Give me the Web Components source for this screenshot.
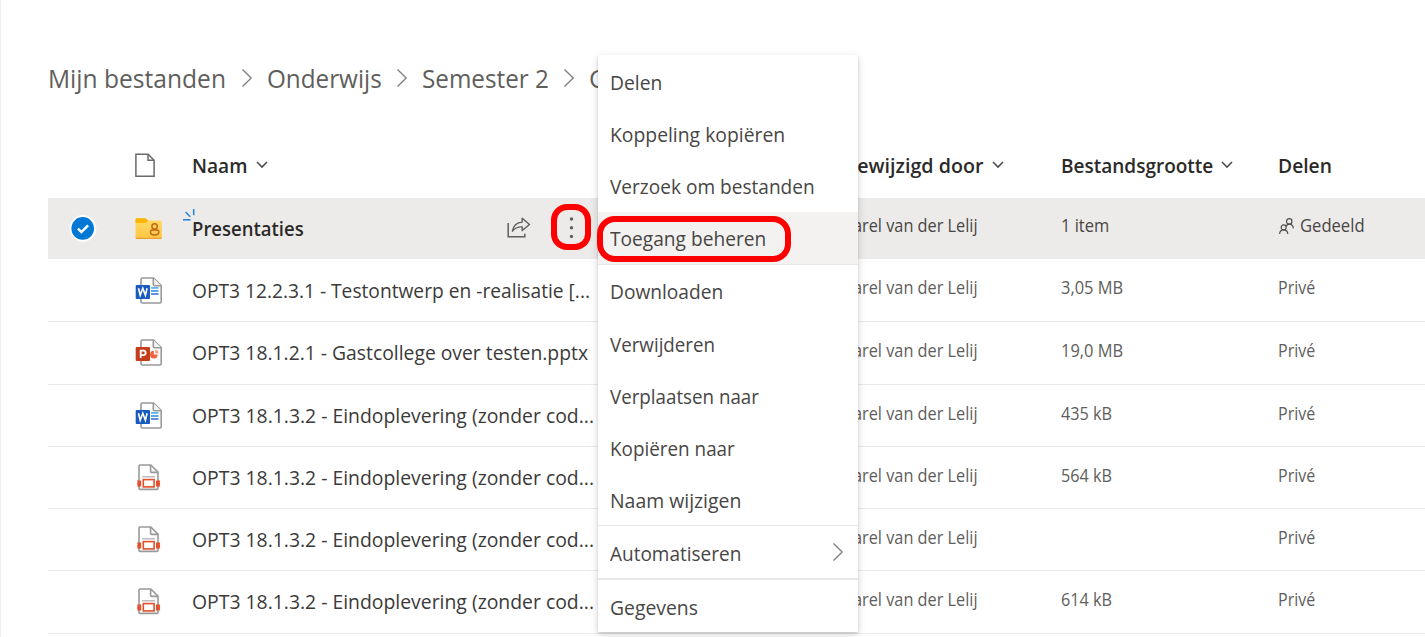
<!DOCTYPE html>
<html lang="nl">
<head>
<meta charset="utf-8">
<title>Mijn bestanden</title>
<style>
html,body{margin:0;height:100%;overflow:hidden;background:#fff}
body{font-family:"Open Sans","Noto Sans",sans-serif}
</style>
</head>
<body>
<file-browser></file-browser>
<script>
function define(name, html, ready) {
  const tpl = document.createElement('template');
  tpl.innerHTML = html;
  customElements.define(name, class extends HTMLElement {
    connectedCallback() {
      if (this.shadowRoot) return;
      this.attachShadow({mode: 'open'}).append(tpl.content.cloneNode(true));
      if (ready) ready(this, this.shadowRoot);
    }
  });
}

/* Text condensed to a given width */
define('fit-text', `<style>
:host{display:inline-block;white-space:nowrap;flex:none}
span{display:inline-block;transform-origin:0 50%}
</style><span><slot></slot></span>`, (host, root) => {
  const w = +host.getAttribute('w');
  if (!w) return;
  const s = root.querySelector('span');
  s.style.transform = 'scaleX(' + w / s.offsetWidth + ')';
  host.style.width = w + 'px';
});

const paper = '<path d="M7.300 2h11.200l7.700 7.700v16a1.300 1.300 0 0 1-1.300 1.300H7.300a1.300 1.300 0 0 1-1.300-1.300V3.300A1.300 1.300 0 0 1 7.300 2Z" fill="#fff" stroke="#999" stroke-width="1.600"/><path d="M18.300 2v6.500a1.300 1.300 0 0 0 1.300 1.300h6.600" fill="#f4f4f4" stroke="#999" stroke-width="1.600"/>';
const icons = {
  page: [28, 28, '<path d="M.9 2.200h12.200l6 6v16H.9Z" fill="none" stroke="#6b6967" stroke-width="1.500"/><path d="M13 2.200v6h6" fill="none" stroke="#6b6967" stroke-width="1.500"/>'],
  folder: [28, 28, '<defs><linearGradient id="f" x2="0" y2="1"><stop stop-color="#ffdc68"/><stop offset="1" stop-color="#ffc543"/></linearGradient></defs><path d="M.5 5.500a1.300 1.300 0 0 1 1.300-1.300h8.400l3 2.400h12.400a1.300 1.300 0 0 1 1.300 1.300v15.800a1.300 1.300 0 0 1-1.300 1.300H1.800a1.300 1.300 0 0 1-1.300-1.300Z" fill="url(#f)"/><path d="M.5 9V5.500a1.300 1.300 0 0 1 1.300-1.300h8.400l3 2.400-2 1.800q-.8.600-1.800.600Z" fill="#ffb400"/><path d="M.6 23.700q.2 1.300 1.300 1.300h23.600q1.200 0 1.400-1.300Z" fill="#e8a02e"/><circle cx="19.600" cy="12.400" r="2.700" fill="none" stroke="#c4661b" stroke-width="1.500"/><path d="M15.500 18q0-2 2-2h4.300q2 0 2 2c0 2-1.800 3-4.200 3s-4.100-1-4.100-3Z" fill="none" stroke="#c4661b" stroke-width="1.500"/>'],
  word: [28, 28, paper + '<path d="M16 11.900h7.500" stroke="#41a5ee" stroke-width="1.500"/><path d="M16 15h7.500" stroke="#2b88e3" stroke-width="1.500"/><path d="M16 18h7.500" stroke="#2b6cd0" stroke-width="1.500"/><rect x=".7" y="9" width="14.300" height="14" rx="1" fill="#185abd"/><path d="m3.500 12.300 1.700 7 2.600-7 2.600 7 1.700-7" fill="none" stroke="#fff" stroke-width="1.600"/>'],
  ppt: [28, 28, paper + '<path d="M18.800 12.800v3.600h3.800a3.800 3.800 0 1 1-3.800-3.600Z" fill="#f0653f"/><path d="M20.300 11.500a3.800 3.800 0 0 1 3.300 3.700h-3.300Z" fill="#ff9a7c"/><rect x=".7" y="9" width="14.300" height="14" rx="1" fill="#c43e1c"/><path d="M5.700 19.900v-7.300h2.700a2.200 2.200 0 0 1 0 4.500H5.700" fill="none" stroke="#fff" stroke-width="1.800"/>'],
  pdf: [28, 28, '<g transform="translate(0 -.7)"><path d="M5 1.700h10.800l7.200 7.200v16.200q0 1-1 1H5q-1 0-1-1V2.700q0-1 1-1Z" fill="#fff" stroke="#999" stroke-width="1.600"/><path d="M15.600 1.800v6.300q0 1 1 1H23" fill="none" stroke="#999" stroke-width="1.600"/><path d="M7 13.500h13" stroke="#b8b8b8" stroke-width="1.400"/><path d="M2 17.300h4.200v5.800H2l.6-1.200-.6-1.300.6-1.500ZM25.300 17.300H21v5.800h4.300l-.6-1.200.6-1.300-.6-1.500Z" fill="#e2502c"/><rect x="8.300" y="16.300" width="10.800" height="7.300" fill="#fff" stroke="#e2502c" stroke-width="1.600"/></g>'],
  chevron: [12, 8, '<path d="m1 1 5 5 5-5" fill="none" stroke="#504e4c" stroke-width="1.600"/>'],
  next: [12, 20, '<path d="m1.500 1.500 8.700 8.500-8.700 8.500" fill="none" stroke="#807e7c" stroke-width="1.300"/>'],
  check: [28, 28, '<circle cx="14" cy="14.400" r="13.300" fill="#fff"/><circle cx="13.700" cy="14.400" r="11.300" fill="#0078d4"/><path d="m9 14.700 3.400 3.400 6.700-6.800" fill="none" stroke="#fff" stroke-width="2.500"/>'],
  share: [24, 22, '<path d="M1.200 6v13.800h16.600v-3" fill="none" stroke="#605e5c" stroke-width="1.500"/><path d="M15.200 1.300 22.500 7.500l-7.300 6v-3.600c-4.200-.2-7.300 1-9.800 4.300.8-5.300 4.300-8.700 9.800-9.100Z" fill="none" stroke="#605e5c" stroke-width="1.400" stroke-linejoin="round"/>'],
  dots: [6, 24, '<g fill="#605e5c"><circle cx="3.500" cy="3" r="1.700"/><circle cx="3.500" cy="11.700" r="1.700"/><circle cx="3.500" cy="20.400" r="1.700"/></g>'],
  people: [17, 18, '<g fill="none" stroke="#504e4c" stroke-width="1.200" transform="translate(.7 1.700)"><circle cx="10.500" cy="3.700" r="2.700"/><path d="M7.500 8.500c.6-1.500 1.800-2 3-2 2.300 0 3.900 1.600 4.200 4.200"/><circle cx="5" cy="9.700" r="2.500"/><path d="M.9 16.300c.1-2.700 1.800-4.200 4.100-4.200s4 1.500 4.100 4.200"/></g>'],
  spark: [14, 13, '<g stroke-width="1.600" fill="none"><path d="M1 11.800h7.500" stroke="#2b88d8"/><path d="m3.600 4 4.700 4.700" stroke="#2b88d8"/><path d="M11.700 1v6.200" stroke="#2b88d8"/></g>']
};
define('ui-icon', `<style>:host{display:block;flex:none;line-height:0}svg{display:block}</style>`, (host, root) => {
  const [w, h, body] = icons[host.getAttribute('name')];
  const box = document.createElement('div');
  box.innerHTML = `<svg width="${w}" height="${h}" viewBox="0 0 ${w} ${h}">${body}</svg>`;
  root.append(box);
});

define('crumb-trail', `<style>
:host{display:flex;align-items:center;height:50px;padding:53px 0 1px 47.500px;font-size:25px;line-height:50px;color:#605e5c}
ui-icon{margin:0 14px 0 15px}
ui-icon:nth-of-type(3){margin-left:14px}
</style>
<fit-text w="178">Mijn bestanden</fit-text><ui-icon name="next"></ui-icon>
<fit-text w="114.500">Onderwijs</fit-text><ui-icon name="next"></ui-icon>
<fit-text w="127">Semester 2</fit-text><ui-icon name="next"></ui-icon>
<fit-text w="18">G</fit-text>`);

const columns = 'display:grid;grid-template-columns:87px 57px 651px 218px 217px 1fr;align-items:center;';
define('list-header', `<style>
:host{${columns}height:64px;padding-top:30px;margin:0 0 0 48px;font-size:20px;font-weight:600;color:#2b2a29;line-height:28px}
div{display:flex;align-items:center}
ui-icon[name=chevron]{margin:-3px 0 0 8px}
</style>
<span></span><ui-icon name="page"></ui-icon>
<div><fit-text w="55.500">Naam</fit-text><ui-icon name="chevron"></ui-icon></div>
<div><fit-text w="140.500">Gewijzigd door</fit-text><ui-icon name="chevron"></ui-icon></div>
<div><fit-text w="152">Bestandsgrootte</fit-text><ui-icon name="chevron"></ui-icon></div>
<div><fit-text w="54">Delen</fit-text></div>`);

define('file-row', `<style>
:host{${columns}box-sizing:border-box;margin-left:48px;border-bottom:1px solid #edebe9;color:#605e5c;font-size:17.500px;line-height:24px}
:host([selected]){background:#edebe9;color:#484644}
.check{padding-left:21px}
:host([icon=ppt]) .type,:host([icon=word]:not([low])) .type{padding-bottom:2px}
.name{display:flex;align-items:center;position:relative;font-size:20px;color:#3b3a39;line-height:28px}
:host([low]) .name{padding-top:2px}
:host([selected]) .name{font-weight:600;color:#2b2a29}
:host([selected]) .name>fit-text{padding-top:2px}
.meta{display:flex;align-items:center;gap:4.500px;padding-bottom:5.500px}
.spark{position:absolute;left:-10px;top:-5px}
.actions{display:flex;align-items:center;position:absolute;left:315px;gap:37px}
.mark{position:relative}
.mark::after{content:"";position:absolute;box-sizing:border-box;left:-17px;top:-12px;width:40px;height:46px;border:6px solid #fd0000;border-radius:16px}
</style>
<div class="check"></div><div class="type"></div>
<div class="name"></div>
<div class="meta"><fit-text w="135">Karel van der Lelij</fit-text></div>
<div class="meta size"></div><div class="meta share"></div>`, (host, root) => {
  const get = n => host.getAttribute(n);
  host.style.height = get('h') + 'px';
  const fit = (w, t) => `<fit-text w="${w}">${t}</fit-text>`;
  const sel = host.hasAttribute('selected');
  root.querySelector('.type').innerHTML = `<ui-icon name="${get('icon')}"></ui-icon>`;
  root.querySelector('.name').innerHTML = fit(get('w'), get('name')) +
    (sel ? '<ui-icon class="spark" name="spark"></ui-icon><div class="actions"><ui-icon name="share"></ui-icon><div class="mark"><ui-icon name="dots"></ui-icon></div></div>' : '');
  if (get('size')) root.querySelector('.size').innerHTML = fit(get('sw'), get('size'));
  root.querySelector('.share').innerHTML = sel ? '<ui-icon name="people"></ui-icon>' + fit(64.5, 'Gedeeld') : fit(37.5, 'Privé');
  if (sel) root.querySelector('.check').innerHTML = '<ui-icon name="check"></ui-icon>';
});

define('menu-item', `<style>
:host{display:flex;align-items:center;justify-content:space-between;height:52px;padding:0 14px 0 11.500px;font-size:20px;line-height:28px;color:#484644}
:host([active]){background:#f3f2f1}
:host([divided]){border-bottom:1px solid #e8e7e6}
:host([thick]){border-bottom-width:2px}
.label{position:relative;top:1px}
:host([late]) .label{top:2px}
:host([active]) .label::after{content:"";position:absolute;box-sizing:border-box;left:-12.500px;top:-9px;width:194px;height:46px;border:6px solid #fd0000;border-radius:18px}
</style><div class="label"></div>`, (host, root) => {
  root.querySelector('.label').innerHTML = `<fit-text w="${host.getAttribute('w')}">${host.getAttribute('label')}</fit-text>`;
  if (host.hasAttribute('submenu')) {
    const i = document.createElement('ui-icon');
    i.setAttribute('name', 'next');
    root.append(i);
  }
});

define('context-menu', `<style>
:host{display:block;position:absolute;left:598px;top:55px;width:260px;height:577px;padding-top:1px;box-sizing:border-box;background:#fff;box-shadow:0 3px 8px rgba(0,0,0,.16),0 1px 2px rgba(0,0,0,.14)}
</style>
<menu-item label="Delen" w="52"></menu-item>
<menu-item label="Koppeling kopiëren" w="175"></menu-item>
<menu-item label="Verzoek om bestanden" w="205"></menu-item>
<menu-item label="Toegang beheren" w="156" active divided></menu-item>
<menu-item label="Downloaden" w="113"></menu-item>
<menu-item label="Verwijderen" w="105" late></menu-item>
<menu-item label="Verplaatsen naar" w="149" late></menu-item>
<menu-item label="Kopiëren naar" w="124.500" late></menu-item>
<menu-item label="Naam wijzigen" w="131" divided late></menu-item>
<menu-item label="Automatiseren" w="131" divided thick submenu late></menu-item>
<menu-item label="Gegevens" w="88" late></menu-item>`);

define('file-browser', `<style>
:host{display:block;position:relative;box-sizing:border-box;width:1425px;height:637px;overflow:hidden;background:#fff;box-shadow:inset 1px 0 #eee}
</style>
<crumb-trail></crumb-trail>
<list-header></list-header>
<file-row selected h="61" icon="folder" name="Presentaties" w="112" size="1 item" sw="48"></file-row>
<file-row low h="63" icon="word" name="OPT3 12.2.3.1 - Testontwerp en -realisatie [..." w="398" size="3,05 MB" sw="62"></file-row>
<file-row h="63" icon="ppt" name="OPT3 18.1.2.1 - Gastcollege over testen.pptx" w="396" size="19,0 MB" sw="62"></file-row>
<file-row h="62" icon="word" name="OPT3 18.1.3.2 - Eindoplevering (zonder cod..." w="402" size="435 kB" sw="51"></file-row>
<file-row h="62" icon="pdf" name="OPT3 18.1.3.2 - Eindoplevering (zonder cod..." w="402" size="564 kB" sw="51"></file-row>
<file-row h="62" icon="pdf" name="OPT3 18.1.3.2 - Eindoplevering (zonder cod..." w="402"></file-row>
<file-row h="63" icon="pdf" name="OPT3 18.1.3.2 - Eindoplevering (zonder cod..." w="402" size="614 kB" sw="51"></file-row>
<context-menu></context-menu>`);
</script>
</body>
</html>
